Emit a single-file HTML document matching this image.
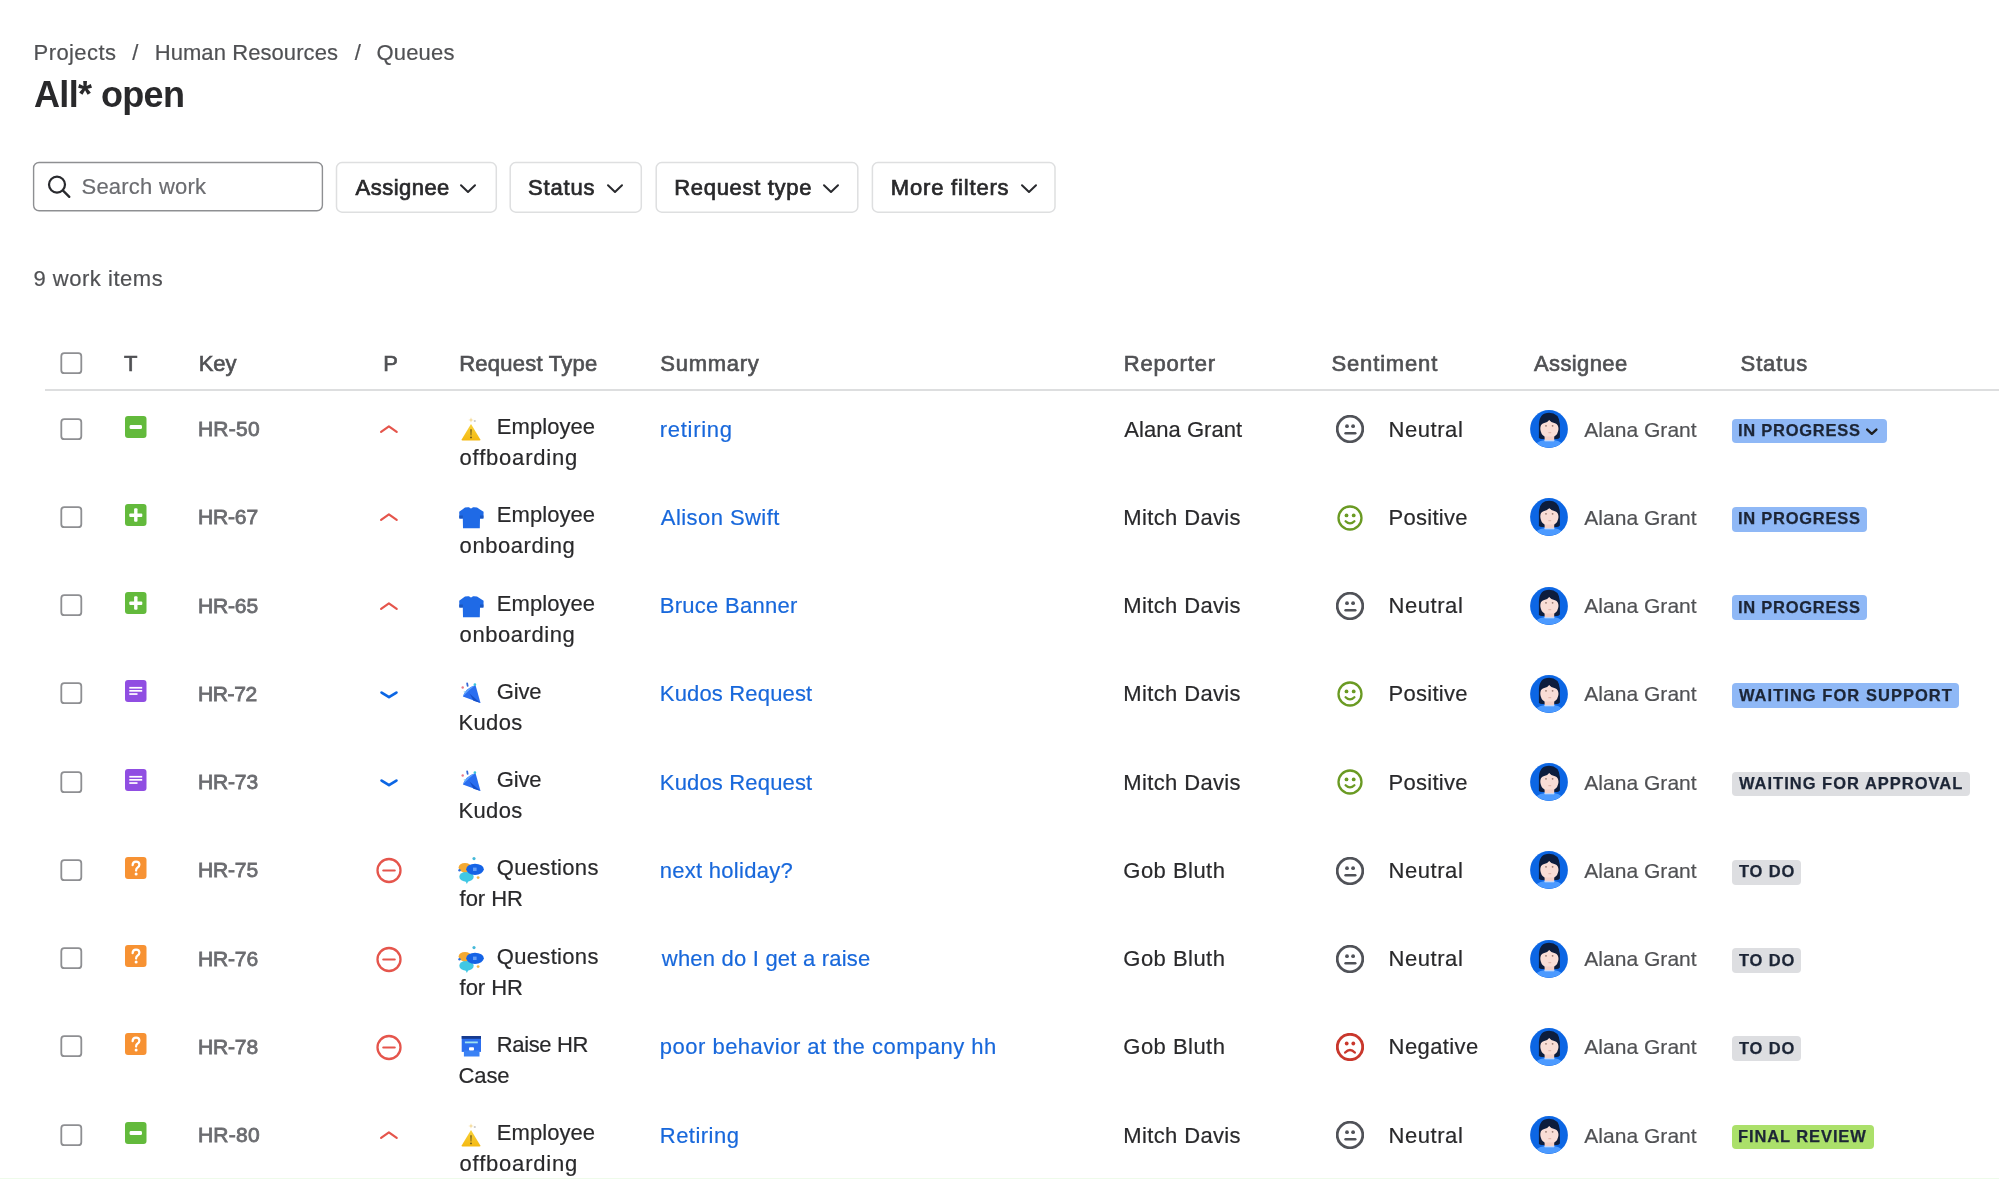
<!DOCTYPE html>
<html><head><meta charset="utf-8"><title>All* open</title>
<style>
html,body{margin:0;padding:0;background:#fff;width:1999px;height:1179px;overflow:hidden;position:relative}
.a{position:absolute;display:block}
.t{position:absolute;white-space:nowrap;font-family:"Liberation Sans",sans-serif}
</style></head><body>
<svg width="0" height="0" style="position:absolute"><defs><clipPath id="avc"><circle cx="19" cy="19" r="18.8"/></clipPath></defs></svg>
<svg class="a" style="left:0;top:0" width="1100" height="230"><rect x="33.6" y="162.5" width="288.8" height="48.3" rx="5.5" fill="none" stroke="#8e8f92" stroke-width="1.4"/></svg>
<svg class="a" style="left:44px;top:171px" width="30" height="30" viewBox="0 0 30 30"><circle cx="13" cy="13.6" r="8" fill="none" stroke="#292a2e" stroke-width="2.2"/><path d="M18.8 19.4 L25.3 25.9" stroke="#292a2e" stroke-width="2.3" stroke-linecap="round"/></svg>
<svg class="a" style="left:0;top:0" width="1100" height="230"><rect x="336.5" y="162.6" width="159.79999999999998" height="49.6" rx="5.5" fill="none" stroke="#dedfe0" stroke-width="1.5"/></svg>
<svg class="a" style="left:459.2px;top:182.5px" width="18" height="11" viewBox="0 0 18 11"><path d="M2 2.2 L9 9 L16 2.2" fill="none" stroke="#292a2e" stroke-width="2" stroke-linecap="round" stroke-linejoin="round"/></svg>
<svg class="a" style="left:0;top:0" width="1100" height="230"><rect x="510.2" y="162.6" width="131.1" height="49.6" rx="5.5" fill="none" stroke="#dedfe0" stroke-width="1.5"/></svg>
<svg class="a" style="left:605.5px;top:182.5px" width="18" height="11" viewBox="0 0 18 11"><path d="M2 2.2 L9 9 L16 2.2" fill="none" stroke="#292a2e" stroke-width="2" stroke-linecap="round" stroke-linejoin="round"/></svg>
<svg class="a" style="left:0;top:0" width="1100" height="230"><rect x="656.2" y="162.6" width="201.6" height="49.6" rx="5.5" fill="none" stroke="#dedfe0" stroke-width="1.5"/></svg>
<svg class="a" style="left:821.8px;top:182.5px" width="18" height="11" viewBox="0 0 18 11"><path d="M2 2.2 L9 9 L16 2.2" fill="none" stroke="#292a2e" stroke-width="2" stroke-linecap="round" stroke-linejoin="round"/></svg>
<svg class="a" style="left:0;top:0" width="1100" height="230"><rect x="872.4000000000001" y="162.6" width="182.6" height="49.6" rx="5.5" fill="none" stroke="#dedfe0" stroke-width="1.5"/></svg>
<svg class="a" style="left:1019.5px;top:182.5px" width="18" height="11" viewBox="0 0 18 11"><path d="M2 2.2 L9 9 L16 2.2" fill="none" stroke="#292a2e" stroke-width="2" stroke-linecap="round" stroke-linejoin="round"/></svg>
<svg class="a" style="left:50px;top:343.00px" width="40" height="40"><rect x="11.3" y="10.2" width="20" height="20" rx="3" fill="none" stroke="#8e8f92" stroke-width="1.8"/></svg>
<div class="a" style="left:45px;top:388.8px;width:1954px;height:2.2px;background:#dddedf"></div>
<svg class="a" style="left:50px;top:408.60px" width="40" height="40"><rect x="11.3" y="10.2" width="20" height="20" rx="3" fill="none" stroke="#8e8f92" stroke-width="1.8"/></svg>
<svg class="a" style="left:125px;top:415.60px" width="21.5" height="22" viewBox="0 0 21.5 22"><rect width="21.5" height="22" rx="3" fill="#63ba3c"/><rect x="4.6" y="9.1" width="12.4" height="4" rx="1.4" fill="#fff"/></svg>
<svg class="a" style="left:377px;top:422.00px" width="24" height="14" viewBox="0 0 24 14"><path d="M4.1 9.9 L11.9 4.4 L19.7 9.9" fill="none" stroke="#e5554c" stroke-width="2.2" stroke-linecap="round" stroke-linejoin="round"/></svg>
<svg class="a" style="left:456px;top:414.00px" width="30" height="30" viewBox="0 0 30 30"><defs><linearGradient id="wg429" x1="0" y1="0" x2="0" y2="1"><stop offset="0" stop-color="#f8d23a"/><stop offset="1" stop-color="#f4b912"/></linearGradient></defs><path d="M15 10 L24.2 25.2 Q24.8 26.4 23.4 26.4 L6.6 26.4 Q5.2 26.4 5.8 25.2 Z" fill="url(#wg429)"/><path d="M14.3 15.2 L15.7 15.2 L15.4 21.6 L14.6 21.6Z" fill="#6d5a1c"/><circle cx="15" cy="23.4" r="0.95" fill="#6d5a1c"/><path d="M15 3.2 L15.6 5.4 L17.8 6 L15.6 6.6 L15 8.8 L14.4 6.6 L12.2 6 L14.4 5.4Z" fill="#f2d58a"/><circle cx="18.8" cy="7" r="1.1" fill="#c9c9c9"/></svg>
<svg class="a" style="left:1336px;top:415.30px" width="28" height="28" viewBox="0 0 28 28"><circle cx="14" cy="14" r="12.8" fill="none" stroke="#505258" stroke-width="2.8"/><circle cx="11" cy="11.2" r="1.9" fill="#505258"/><circle cx="17.1" cy="11.2" r="1.9" fill="#505258"/><path d="M9.6 18.2 L19.2 18.2" stroke="#505258" stroke-width="2.6" stroke-linecap="round"/></svg>
<svg class="a" style="left:1529.8px;top:410.20px" width="38" height="38" viewBox="0 0 38 38"><circle cx="19" cy="19" r="18.9" fill="#0c66e4"/><g clip-path="url(#avc)"><path d="M3.5 39 Q5.5 31 14.2 30.2 L24.6 30.2 Q32.5 31 34.5 39Z" fill="#4c9aff"/><path d="M8.9 28 L8.9 14 Q9.5 2.8 19.2 2.8 Q29 2.8 29.9 14 L29.9 27.5 Q28 29.6 25.3 28.9 L13.9 28.9 Q10.6 29.6 8.9 28 Z" fill="#0d1d3d"/><rect x="14.6" y="21" width="9.6" height="9.4" fill="#f3cfc7"/><path d="M14.2 30.2 L24.6 30.2 L24 31.2 L14.8 31.2Z" fill="#dfe9fb"/><path d="M10.3 19 Q10.1 14.2 13.5 13.2 Q17.5 12.6 19.2 9.9 Q21 12.6 25 13.2 Q28.5 14.2 28.5 19 Q28.1 24.3 24.2 26.6 L14.6 26.6 Q10.7 24.3 10.3 19 Z" fill="#f9ddd6"/><circle cx="16" cy="15.8" r="0.9" fill="#9a7b72"/><circle cx="22.6" cy="15.8" r="0.9" fill="#9a7b72"/><path d="M18.4 22.7 L21.2 22.7" stroke="#d7a49b" stroke-width="0.8"/></g></svg>
<div class="a" style="left:1731.7px;top:418.60px;width:155.0px;height:24.8px;background:#8fb8f6;border-radius:4px"></div>
<svg class="a" style="left:1864px;top:427.00px" width="16" height="10" viewBox="0 0 16 10"><path d="M3.2 2.6 L7.8 6.8 L12.4 2.6" fill="none" stroke="#1e1f21" stroke-width="2.4" stroke-linecap="round" stroke-linejoin="round"/></svg>
<svg class="a" style="left:50px;top:496.85px" width="40" height="40"><rect x="11.3" y="10.2" width="20" height="20" rx="3" fill="none" stroke="#8e8f92" stroke-width="1.8"/></svg>
<svg class="a" style="left:125px;top:503.85px" width="21.5" height="22" viewBox="0 0 21.5 22"><rect width="21.5" height="22" rx="3" fill="#63ba3c"/><rect x="4.3" y="9.5" width="13" height="3.4" rx="1" fill="#fff"/><rect x="9.1" y="4.3" width="3.4" height="13.4" rx="1" fill="#fff"/></svg>
<svg class="a" style="left:377px;top:510.25px" width="24" height="14" viewBox="0 0 24 14"><path d="M4.1 9.9 L11.9 4.4 L19.7 9.9" fill="none" stroke="#e5554c" stroke-width="2.2" stroke-linecap="round" stroke-linejoin="round"/></svg>
<svg class="a" style="left:456px;top:502.25px" width="30" height="30" viewBox="0 0 30 30"><path d="M9 5.6 Q11 5.1 13 5.3 Q15 7.5 17 5.3 Q19 5.1 21 5.6 L27.6 9.8 L27.4 16.4 L24 16.4 L23.8 26.2 L7 26.2 L6.8 16.4 L3.4 16.4 L3.2 9.8 Z" fill="#1f6ae6"/><path d="M3.2 13.5 L6.8 13.5 L6.8 16.4 L3.4 16.4Z M24 13.5 L27.5 13.5 L27.4 16.4 L24 16.4Z" fill="#1a56c0"/></svg>
<svg class="a" style="left:1336px;top:503.55px" width="28" height="28" viewBox="0 0 28 28"><circle cx="14" cy="14" r="11.5" fill="none" stroke="#6a9a23" stroke-width="2.3"/><circle cx="10.5" cy="11.4" r="1.9" fill="#6a9a23"/><circle cx="17.7" cy="11.4" r="1.9" fill="#6a9a23"/><path d="M9.6 17.2 Q14 21.6 18.4 17.2" fill="none" stroke="#6a9a23" stroke-width="2.3" stroke-linecap="round"/></svg>
<svg class="a" style="left:1529.8px;top:498.45px" width="38" height="38" viewBox="0 0 38 38"><circle cx="19" cy="19" r="18.9" fill="#0c66e4"/><g clip-path="url(#avc)"><path d="M3.5 39 Q5.5 31 14.2 30.2 L24.6 30.2 Q32.5 31 34.5 39Z" fill="#4c9aff"/><path d="M8.9 28 L8.9 14 Q9.5 2.8 19.2 2.8 Q29 2.8 29.9 14 L29.9 27.5 Q28 29.6 25.3 28.9 L13.9 28.9 Q10.6 29.6 8.9 28 Z" fill="#0d1d3d"/><rect x="14.6" y="21" width="9.6" height="9.4" fill="#f3cfc7"/><path d="M14.2 30.2 L24.6 30.2 L24 31.2 L14.8 31.2Z" fill="#dfe9fb"/><path d="M10.3 19 Q10.1 14.2 13.5 13.2 Q17.5 12.6 19.2 9.9 Q21 12.6 25 13.2 Q28.5 14.2 28.5 19 Q28.1 24.3 24.2 26.6 L14.6 26.6 Q10.7 24.3 10.3 19 Z" fill="#f9ddd6"/><circle cx="16" cy="15.8" r="0.9" fill="#9a7b72"/><circle cx="22.6" cy="15.8" r="0.9" fill="#9a7b72"/><path d="M18.4 22.7 L21.2 22.7" stroke="#d7a49b" stroke-width="0.8"/></g></svg>
<div class="a" style="left:1731.7px;top:506.85px;width:135.3px;height:24.8px;background:#8fb8f6;border-radius:4px"></div>
<svg class="a" style="left:50px;top:585.10px" width="40" height="40"><rect x="11.3" y="10.2" width="20" height="20" rx="3" fill="none" stroke="#8e8f92" stroke-width="1.8"/></svg>
<svg class="a" style="left:125px;top:592.10px" width="21.5" height="22" viewBox="0 0 21.5 22"><rect width="21.5" height="22" rx="3" fill="#63ba3c"/><rect x="4.3" y="9.5" width="13" height="3.4" rx="1" fill="#fff"/><rect x="9.1" y="4.3" width="3.4" height="13.4" rx="1" fill="#fff"/></svg>
<svg class="a" style="left:377px;top:598.50px" width="24" height="14" viewBox="0 0 24 14"><path d="M4.1 9.9 L11.9 4.4 L19.7 9.9" fill="none" stroke="#e5554c" stroke-width="2.2" stroke-linecap="round" stroke-linejoin="round"/></svg>
<svg class="a" style="left:456px;top:590.50px" width="30" height="30" viewBox="0 0 30 30"><path d="M9 5.6 Q11 5.1 13 5.3 Q15 7.5 17 5.3 Q19 5.1 21 5.6 L27.6 9.8 L27.4 16.4 L24 16.4 L23.8 26.2 L7 26.2 L6.8 16.4 L3.4 16.4 L3.2 9.8 Z" fill="#1f6ae6"/><path d="M3.2 13.5 L6.8 13.5 L6.8 16.4 L3.4 16.4Z M24 13.5 L27.5 13.5 L27.4 16.4 L24 16.4Z" fill="#1a56c0"/></svg>
<svg class="a" style="left:1336px;top:591.80px" width="28" height="28" viewBox="0 0 28 28"><circle cx="14" cy="14" r="12.8" fill="none" stroke="#505258" stroke-width="2.8"/><circle cx="11" cy="11.2" r="1.9" fill="#505258"/><circle cx="17.1" cy="11.2" r="1.9" fill="#505258"/><path d="M9.6 18.2 L19.2 18.2" stroke="#505258" stroke-width="2.6" stroke-linecap="round"/></svg>
<svg class="a" style="left:1529.8px;top:586.70px" width="38" height="38" viewBox="0 0 38 38"><circle cx="19" cy="19" r="18.9" fill="#0c66e4"/><g clip-path="url(#avc)"><path d="M3.5 39 Q5.5 31 14.2 30.2 L24.6 30.2 Q32.5 31 34.5 39Z" fill="#4c9aff"/><path d="M8.9 28 L8.9 14 Q9.5 2.8 19.2 2.8 Q29 2.8 29.9 14 L29.9 27.5 Q28 29.6 25.3 28.9 L13.9 28.9 Q10.6 29.6 8.9 28 Z" fill="#0d1d3d"/><rect x="14.6" y="21" width="9.6" height="9.4" fill="#f3cfc7"/><path d="M14.2 30.2 L24.6 30.2 L24 31.2 L14.8 31.2Z" fill="#dfe9fb"/><path d="M10.3 19 Q10.1 14.2 13.5 13.2 Q17.5 12.6 19.2 9.9 Q21 12.6 25 13.2 Q28.5 14.2 28.5 19 Q28.1 24.3 24.2 26.6 L14.6 26.6 Q10.7 24.3 10.3 19 Z" fill="#f9ddd6"/><circle cx="16" cy="15.8" r="0.9" fill="#9a7b72"/><circle cx="22.6" cy="15.8" r="0.9" fill="#9a7b72"/><path d="M18.4 22.7 L21.2 22.7" stroke="#d7a49b" stroke-width="0.8"/></g></svg>
<div class="a" style="left:1731.7px;top:595.10px;width:135.3px;height:24.8px;background:#8fb8f6;border-radius:4px"></div>
<svg class="a" style="left:50px;top:673.35px" width="40" height="40"><rect x="11.3" y="10.2" width="20" height="20" rx="3" fill="none" stroke="#8e8f92" stroke-width="1.8"/></svg>
<svg class="a" style="left:125px;top:680.35px" width="21.5" height="22" viewBox="0 0 21.5 22"><rect width="21.5" height="22" rx="3" fill="#904ee2"/><rect x="4.3" y="6.9" width="12.9" height="1.7" fill="#fff"/><rect x="4.3" y="10.0" width="12.9" height="1.7" fill="#fff"/><rect x="4.3" y="13.2" width="8.2" height="1.7" fill="#fff"/></svg>
<svg class="a" style="left:377px;top:686.75px" width="24" height="14" viewBox="0 0 24 14"><path d="M4.6 5.6 L12 10.1 L19.4 5.6" fill="none" stroke="#0c66e4" stroke-width="2.8" stroke-linecap="round" stroke-linejoin="round"/></svg>
<svg class="a" style="left:456px;top:678.75px" width="30" height="30" viewBox="0 0 30 30"><path d="M6.9 17.6 Q9.2 9.6 19.5 6.1 L24.5 23.9 Z" fill="#2a6ef0"/><path d="M13.5 14.5 L24.5 23.9 L17.5 21.8 Z" fill="#1650c8"/><path d="M6.9 17.6 Q9.2 9.6 19.5 6.1 Q13 11 6.9 17.6Z" fill="#5fa0ff"/><rect x="10.5" y="3.4" width="1.8" height="4.4" rx="0.9" fill="#3466d6" transform="rotate(-10 11.4 5.6)"/><circle cx="6.7" cy="8.5" r="1.2" fill="#e7788a"/><circle cx="18.9" cy="5.6" r="1.3" fill="#39c3dc"/><circle cx="8.5" cy="12.8" r="0.9" fill="#a6e0ee"/></svg>
<svg class="a" style="left:1336px;top:680.05px" width="28" height="28" viewBox="0 0 28 28"><circle cx="14" cy="14" r="11.5" fill="none" stroke="#6a9a23" stroke-width="2.3"/><circle cx="10.5" cy="11.4" r="1.9" fill="#6a9a23"/><circle cx="17.7" cy="11.4" r="1.9" fill="#6a9a23"/><path d="M9.6 17.2 Q14 21.6 18.4 17.2" fill="none" stroke="#6a9a23" stroke-width="2.3" stroke-linecap="round"/></svg>
<svg class="a" style="left:1529.8px;top:674.95px" width="38" height="38" viewBox="0 0 38 38"><circle cx="19" cy="19" r="18.9" fill="#0c66e4"/><g clip-path="url(#avc)"><path d="M3.5 39 Q5.5 31 14.2 30.2 L24.6 30.2 Q32.5 31 34.5 39Z" fill="#4c9aff"/><path d="M8.9 28 L8.9 14 Q9.5 2.8 19.2 2.8 Q29 2.8 29.9 14 L29.9 27.5 Q28 29.6 25.3 28.9 L13.9 28.9 Q10.6 29.6 8.9 28 Z" fill="#0d1d3d"/><rect x="14.6" y="21" width="9.6" height="9.4" fill="#f3cfc7"/><path d="M14.2 30.2 L24.6 30.2 L24 31.2 L14.8 31.2Z" fill="#dfe9fb"/><path d="M10.3 19 Q10.1 14.2 13.5 13.2 Q17.5 12.6 19.2 9.9 Q21 12.6 25 13.2 Q28.5 14.2 28.5 19 Q28.1 24.3 24.2 26.6 L14.6 26.6 Q10.7 24.3 10.3 19 Z" fill="#f9ddd6"/><circle cx="16" cy="15.8" r="0.9" fill="#9a7b72"/><circle cx="22.6" cy="15.8" r="0.9" fill="#9a7b72"/><path d="M18.4 22.7 L21.2 22.7" stroke="#d7a49b" stroke-width="0.8"/></g></svg>
<div class="a" style="left:1731.7px;top:683.35px;width:227.7px;height:24.8px;background:#8fb8f6;border-radius:4px"></div>
<svg class="a" style="left:50px;top:761.60px" width="40" height="40"><rect x="11.3" y="10.2" width="20" height="20" rx="3" fill="none" stroke="#8e8f92" stroke-width="1.8"/></svg>
<svg class="a" style="left:125px;top:768.60px" width="21.5" height="22" viewBox="0 0 21.5 22"><rect width="21.5" height="22" rx="3" fill="#904ee2"/><rect x="4.3" y="6.9" width="12.9" height="1.7" fill="#fff"/><rect x="4.3" y="10.0" width="12.9" height="1.7" fill="#fff"/><rect x="4.3" y="13.2" width="8.2" height="1.7" fill="#fff"/></svg>
<svg class="a" style="left:377px;top:775.00px" width="24" height="14" viewBox="0 0 24 14"><path d="M4.6 5.6 L12 10.1 L19.4 5.6" fill="none" stroke="#0c66e4" stroke-width="2.8" stroke-linecap="round" stroke-linejoin="round"/></svg>
<svg class="a" style="left:456px;top:767.00px" width="30" height="30" viewBox="0 0 30 30"><path d="M6.9 17.6 Q9.2 9.6 19.5 6.1 L24.5 23.9 Z" fill="#2a6ef0"/><path d="M13.5 14.5 L24.5 23.9 L17.5 21.8 Z" fill="#1650c8"/><path d="M6.9 17.6 Q9.2 9.6 19.5 6.1 Q13 11 6.9 17.6Z" fill="#5fa0ff"/><rect x="10.5" y="3.4" width="1.8" height="4.4" rx="0.9" fill="#3466d6" transform="rotate(-10 11.4 5.6)"/><circle cx="6.7" cy="8.5" r="1.2" fill="#e7788a"/><circle cx="18.9" cy="5.6" r="1.3" fill="#39c3dc"/><circle cx="8.5" cy="12.8" r="0.9" fill="#a6e0ee"/></svg>
<svg class="a" style="left:1336px;top:768.30px" width="28" height="28" viewBox="0 0 28 28"><circle cx="14" cy="14" r="11.5" fill="none" stroke="#6a9a23" stroke-width="2.3"/><circle cx="10.5" cy="11.4" r="1.9" fill="#6a9a23"/><circle cx="17.7" cy="11.4" r="1.9" fill="#6a9a23"/><path d="M9.6 17.2 Q14 21.6 18.4 17.2" fill="none" stroke="#6a9a23" stroke-width="2.3" stroke-linecap="round"/></svg>
<svg class="a" style="left:1529.8px;top:763.20px" width="38" height="38" viewBox="0 0 38 38"><circle cx="19" cy="19" r="18.9" fill="#0c66e4"/><g clip-path="url(#avc)"><path d="M3.5 39 Q5.5 31 14.2 30.2 L24.6 30.2 Q32.5 31 34.5 39Z" fill="#4c9aff"/><path d="M8.9 28 L8.9 14 Q9.5 2.8 19.2 2.8 Q29 2.8 29.9 14 L29.9 27.5 Q28 29.6 25.3 28.9 L13.9 28.9 Q10.6 29.6 8.9 28 Z" fill="#0d1d3d"/><rect x="14.6" y="21" width="9.6" height="9.4" fill="#f3cfc7"/><path d="M14.2 30.2 L24.6 30.2 L24 31.2 L14.8 31.2Z" fill="#dfe9fb"/><path d="M10.3 19 Q10.1 14.2 13.5 13.2 Q17.5 12.6 19.2 9.9 Q21 12.6 25 13.2 Q28.5 14.2 28.5 19 Q28.1 24.3 24.2 26.6 L14.6 26.6 Q10.7 24.3 10.3 19 Z" fill="#f9ddd6"/><circle cx="16" cy="15.8" r="0.9" fill="#9a7b72"/><circle cx="22.6" cy="15.8" r="0.9" fill="#9a7b72"/><path d="M18.4 22.7 L21.2 22.7" stroke="#d7a49b" stroke-width="0.8"/></g></svg>
<div class="a" style="left:1731.7px;top:771.60px;width:238.1px;height:24.8px;background:#dddee1;border-radius:4px"></div>
<svg class="a" style="left:50px;top:849.85px" width="40" height="40"><rect x="11.3" y="10.2" width="20" height="20" rx="3" fill="none" stroke="#8e8f92" stroke-width="1.8"/></svg>
<svg class="a" style="left:125px;top:856.85px" width="21.5" height="22" viewBox="0 0 21.5 22"><rect width="21.5" height="22" rx="3" fill="#f79233"/><path d="M7.6 8.2 Q7.6 4.6 11 4.6 Q14.4 4.6 14.4 7.8 Q14.4 9.6 12.4 10.8 Q11.1 11.6 11.1 13.6" fill="none" stroke="#fff" stroke-width="2.2" stroke-linecap="round"/><circle cx="11.1" cy="17.1" r="1.5" fill="#fff"/></svg>
<svg class="a" style="left:375px;top:856.25px" width="28" height="28" viewBox="0 0 28 28"><circle cx="14" cy="14.5" r="11.5" fill="none" stroke="#e5554c" stroke-width="2.3"/><path d="M8.3 14.5 L19.7 14.5" stroke="#e5554c" stroke-width="2.2" stroke-linecap="round"/></svg>
<svg class="a" style="left:456px;top:855.25px" width="30" height="30" viewBox="0 0 30 30"><ellipse cx="10.5" cy="21.7" rx="7.2" ry="5" fill="#40c8e4"/><path d="M9 25 L10.8 29 L13 25Z" fill="#40c8e4"/><ellipse cx="9" cy="12.6" rx="6.4" ry="4.7" fill="#f4aa33"/><ellipse cx="19" cy="14.3" rx="8.8" ry="5.6" fill="#1463e6"/><path d="M17 12.6 L20.6 12.6 L20.6 16 L17 16Z" fill="#7fb0f8" opacity="0.75"/><circle cx="18" cy="3.6" r="1.6" fill="#46b9d8"/><circle cx="22.1" cy="22.6" r="1.4" fill="#f2b84b"/><circle cx="3.5" cy="15.2" r="1.2" fill="#2f6fe0"/></svg>
<svg class="a" style="left:1336px;top:856.55px" width="28" height="28" viewBox="0 0 28 28"><circle cx="14" cy="14" r="12.8" fill="none" stroke="#505258" stroke-width="2.8"/><circle cx="11" cy="11.2" r="1.9" fill="#505258"/><circle cx="17.1" cy="11.2" r="1.9" fill="#505258"/><path d="M9.6 18.2 L19.2 18.2" stroke="#505258" stroke-width="2.6" stroke-linecap="round"/></svg>
<svg class="a" style="left:1529.8px;top:851.45px" width="38" height="38" viewBox="0 0 38 38"><circle cx="19" cy="19" r="18.9" fill="#0c66e4"/><g clip-path="url(#avc)"><path d="M3.5 39 Q5.5 31 14.2 30.2 L24.6 30.2 Q32.5 31 34.5 39Z" fill="#4c9aff"/><path d="M8.9 28 L8.9 14 Q9.5 2.8 19.2 2.8 Q29 2.8 29.9 14 L29.9 27.5 Q28 29.6 25.3 28.9 L13.9 28.9 Q10.6 29.6 8.9 28 Z" fill="#0d1d3d"/><rect x="14.6" y="21" width="9.6" height="9.4" fill="#f3cfc7"/><path d="M14.2 30.2 L24.6 30.2 L24 31.2 L14.8 31.2Z" fill="#dfe9fb"/><path d="M10.3 19 Q10.1 14.2 13.5 13.2 Q17.5 12.6 19.2 9.9 Q21 12.6 25 13.2 Q28.5 14.2 28.5 19 Q28.1 24.3 24.2 26.6 L14.6 26.6 Q10.7 24.3 10.3 19 Z" fill="#f9ddd6"/><circle cx="16" cy="15.8" r="0.9" fill="#9a7b72"/><circle cx="22.6" cy="15.8" r="0.9" fill="#9a7b72"/><path d="M18.4 22.7 L21.2 22.7" stroke="#d7a49b" stroke-width="0.8"/></g></svg>
<div class="a" style="left:1731.7px;top:859.85px;width:69.0px;height:24.8px;background:#dddee1;border-radius:4px"></div>
<svg class="a" style="left:50px;top:938.10px" width="40" height="40"><rect x="11.3" y="10.2" width="20" height="20" rx="3" fill="none" stroke="#8e8f92" stroke-width="1.8"/></svg>
<svg class="a" style="left:125px;top:945.10px" width="21.5" height="22" viewBox="0 0 21.5 22"><rect width="21.5" height="22" rx="3" fill="#f79233"/><path d="M7.6 8.2 Q7.6 4.6 11 4.6 Q14.4 4.6 14.4 7.8 Q14.4 9.6 12.4 10.8 Q11.1 11.6 11.1 13.6" fill="none" stroke="#fff" stroke-width="2.2" stroke-linecap="round"/><circle cx="11.1" cy="17.1" r="1.5" fill="#fff"/></svg>
<svg class="a" style="left:375px;top:944.50px" width="28" height="28" viewBox="0 0 28 28"><circle cx="14" cy="14.5" r="11.5" fill="none" stroke="#e5554c" stroke-width="2.3"/><path d="M8.3 14.5 L19.7 14.5" stroke="#e5554c" stroke-width="2.2" stroke-linecap="round"/></svg>
<svg class="a" style="left:456px;top:943.50px" width="30" height="30" viewBox="0 0 30 30"><ellipse cx="10.5" cy="21.7" rx="7.2" ry="5" fill="#40c8e4"/><path d="M9 25 L10.8 29 L13 25Z" fill="#40c8e4"/><ellipse cx="9" cy="12.6" rx="6.4" ry="4.7" fill="#f4aa33"/><ellipse cx="19" cy="14.3" rx="8.8" ry="5.6" fill="#1463e6"/><path d="M17 12.6 L20.6 12.6 L20.6 16 L17 16Z" fill="#7fb0f8" opacity="0.75"/><circle cx="18" cy="3.6" r="1.6" fill="#46b9d8"/><circle cx="22.1" cy="22.6" r="1.4" fill="#f2b84b"/><circle cx="3.5" cy="15.2" r="1.2" fill="#2f6fe0"/></svg>
<svg class="a" style="left:1336px;top:944.80px" width="28" height="28" viewBox="0 0 28 28"><circle cx="14" cy="14" r="12.8" fill="none" stroke="#505258" stroke-width="2.8"/><circle cx="11" cy="11.2" r="1.9" fill="#505258"/><circle cx="17.1" cy="11.2" r="1.9" fill="#505258"/><path d="M9.6 18.2 L19.2 18.2" stroke="#505258" stroke-width="2.6" stroke-linecap="round"/></svg>
<svg class="a" style="left:1529.8px;top:939.70px" width="38" height="38" viewBox="0 0 38 38"><circle cx="19" cy="19" r="18.9" fill="#0c66e4"/><g clip-path="url(#avc)"><path d="M3.5 39 Q5.5 31 14.2 30.2 L24.6 30.2 Q32.5 31 34.5 39Z" fill="#4c9aff"/><path d="M8.9 28 L8.9 14 Q9.5 2.8 19.2 2.8 Q29 2.8 29.9 14 L29.9 27.5 Q28 29.6 25.3 28.9 L13.9 28.9 Q10.6 29.6 8.9 28 Z" fill="#0d1d3d"/><rect x="14.6" y="21" width="9.6" height="9.4" fill="#f3cfc7"/><path d="M14.2 30.2 L24.6 30.2 L24 31.2 L14.8 31.2Z" fill="#dfe9fb"/><path d="M10.3 19 Q10.1 14.2 13.5 13.2 Q17.5 12.6 19.2 9.9 Q21 12.6 25 13.2 Q28.5 14.2 28.5 19 Q28.1 24.3 24.2 26.6 L14.6 26.6 Q10.7 24.3 10.3 19 Z" fill="#f9ddd6"/><circle cx="16" cy="15.8" r="0.9" fill="#9a7b72"/><circle cx="22.6" cy="15.8" r="0.9" fill="#9a7b72"/><path d="M18.4 22.7 L21.2 22.7" stroke="#d7a49b" stroke-width="0.8"/></g></svg>
<div class="a" style="left:1731.7px;top:948.10px;width:69.0px;height:24.8px;background:#dddee1;border-radius:4px"></div>
<svg class="a" style="left:50px;top:1026.35px" width="40" height="40"><rect x="11.3" y="10.2" width="20" height="20" rx="3" fill="none" stroke="#8e8f92" stroke-width="1.8"/></svg>
<svg class="a" style="left:125px;top:1033.35px" width="21.5" height="22" viewBox="0 0 21.5 22"><rect width="21.5" height="22" rx="3" fill="#f79233"/><path d="M7.6 8.2 Q7.6 4.6 11 4.6 Q14.4 4.6 14.4 7.8 Q14.4 9.6 12.4 10.8 Q11.1 11.6 11.1 13.6" fill="none" stroke="#fff" stroke-width="2.2" stroke-linecap="round"/><circle cx="11.1" cy="17.1" r="1.5" fill="#fff"/></svg>
<svg class="a" style="left:375px;top:1032.75px" width="28" height="28" viewBox="0 0 28 28"><circle cx="14" cy="14.5" r="11.5" fill="none" stroke="#e5554c" stroke-width="2.3"/><path d="M8.3 14.5 L19.7 14.5" stroke="#e5554c" stroke-width="2.2" stroke-linecap="round"/></svg>
<svg class="a" style="left:456px;top:1031.75px" width="30" height="30" viewBox="0 0 30 30"><rect x="5.7" y="4" width="19.3" height="15.9" fill="#2c6fef"/><rect x="7.9" y="18.5" width="15.6" height="6" fill="#3a82f5"/><rect x="5.7" y="4" width="19.3" height="2.8" fill="#173b8f"/><rect x="8.9" y="9.5" width="12.9" height="1.8" fill="#9fe3ef"/><rect x="13" y="15.2" width="5" height="3.4" rx="1" fill="#fff"/></svg>
<svg class="a" style="left:1336px;top:1033.05px" width="28" height="28" viewBox="0 0 28 28"><circle cx="14" cy="14" r="12.7" fill="none" stroke="#c9372c" stroke-width="2.9"/><circle cx="10.7" cy="10.5" r="1.9" fill="#c9372c"/><circle cx="17.3" cy="10.5" r="1.9" fill="#c9372c"/><path d="M9.2 19.5 Q14 14.6 18.8 19.5" fill="none" stroke="#c9372c" stroke-width="2.5" stroke-linecap="round"/></svg>
<svg class="a" style="left:1529.8px;top:1027.95px" width="38" height="38" viewBox="0 0 38 38"><circle cx="19" cy="19" r="18.9" fill="#0c66e4"/><g clip-path="url(#avc)"><path d="M3.5 39 Q5.5 31 14.2 30.2 L24.6 30.2 Q32.5 31 34.5 39Z" fill="#4c9aff"/><path d="M8.9 28 L8.9 14 Q9.5 2.8 19.2 2.8 Q29 2.8 29.9 14 L29.9 27.5 Q28 29.6 25.3 28.9 L13.9 28.9 Q10.6 29.6 8.9 28 Z" fill="#0d1d3d"/><rect x="14.6" y="21" width="9.6" height="9.4" fill="#f3cfc7"/><path d="M14.2 30.2 L24.6 30.2 L24 31.2 L14.8 31.2Z" fill="#dfe9fb"/><path d="M10.3 19 Q10.1 14.2 13.5 13.2 Q17.5 12.6 19.2 9.9 Q21 12.6 25 13.2 Q28.5 14.2 28.5 19 Q28.1 24.3 24.2 26.6 L14.6 26.6 Q10.7 24.3 10.3 19 Z" fill="#f9ddd6"/><circle cx="16" cy="15.8" r="0.9" fill="#9a7b72"/><circle cx="22.6" cy="15.8" r="0.9" fill="#9a7b72"/><path d="M18.4 22.7 L21.2 22.7" stroke="#d7a49b" stroke-width="0.8"/></g></svg>
<div class="a" style="left:1731.7px;top:1036.35px;width:69.0px;height:24.8px;background:#dddee1;border-radius:4px"></div>
<svg class="a" style="left:50px;top:1114.60px" width="40" height="40"><rect x="11.3" y="10.2" width="20" height="20" rx="3" fill="none" stroke="#8e8f92" stroke-width="1.8"/></svg>
<svg class="a" style="left:125px;top:1121.60px" width="21.5" height="22" viewBox="0 0 21.5 22"><rect width="21.5" height="22" rx="3" fill="#63ba3c"/><rect x="4.6" y="9.1" width="12.4" height="4" rx="1.4" fill="#fff"/></svg>
<svg class="a" style="left:377px;top:1128.00px" width="24" height="14" viewBox="0 0 24 14"><path d="M4.1 9.9 L11.9 4.4 L19.7 9.9" fill="none" stroke="#e5554c" stroke-width="2.2" stroke-linecap="round" stroke-linejoin="round"/></svg>
<svg class="a" style="left:456px;top:1120.00px" width="30" height="30" viewBox="0 0 30 30"><defs><linearGradient id="wg1135" x1="0" y1="0" x2="0" y2="1"><stop offset="0" stop-color="#f8d23a"/><stop offset="1" stop-color="#f4b912"/></linearGradient></defs><path d="M15 10 L24.2 25.2 Q24.8 26.4 23.4 26.4 L6.6 26.4 Q5.2 26.4 5.8 25.2 Z" fill="url(#wg1135)"/><path d="M14.3 15.2 L15.7 15.2 L15.4 21.6 L14.6 21.6Z" fill="#6d5a1c"/><circle cx="15" cy="23.4" r="0.95" fill="#6d5a1c"/><path d="M15 3.2 L15.6 5.4 L17.8 6 L15.6 6.6 L15 8.8 L14.4 6.6 L12.2 6 L14.4 5.4Z" fill="#f2d58a"/><circle cx="18.8" cy="7" r="1.1" fill="#c9c9c9"/></svg>
<svg class="a" style="left:1336px;top:1121.30px" width="28" height="28" viewBox="0 0 28 28"><circle cx="14" cy="14" r="12.8" fill="none" stroke="#505258" stroke-width="2.8"/><circle cx="11" cy="11.2" r="1.9" fill="#505258"/><circle cx="17.1" cy="11.2" r="1.9" fill="#505258"/><path d="M9.6 18.2 L19.2 18.2" stroke="#505258" stroke-width="2.6" stroke-linecap="round"/></svg>
<svg class="a" style="left:1529.8px;top:1116.20px" width="38" height="38" viewBox="0 0 38 38"><circle cx="19" cy="19" r="18.9" fill="#0c66e4"/><g clip-path="url(#avc)"><path d="M3.5 39 Q5.5 31 14.2 30.2 L24.6 30.2 Q32.5 31 34.5 39Z" fill="#4c9aff"/><path d="M8.9 28 L8.9 14 Q9.5 2.8 19.2 2.8 Q29 2.8 29.9 14 L29.9 27.5 Q28 29.6 25.3 28.9 L13.9 28.9 Q10.6 29.6 8.9 28 Z" fill="#0d1d3d"/><rect x="14.6" y="21" width="9.6" height="9.4" fill="#f3cfc7"/><path d="M14.2 30.2 L24.6 30.2 L24 31.2 L14.8 31.2Z" fill="#dfe9fb"/><path d="M10.3 19 Q10.1 14.2 13.5 13.2 Q17.5 12.6 19.2 9.9 Q21 12.6 25 13.2 Q28.5 14.2 28.5 19 Q28.1 24.3 24.2 26.6 L14.6 26.6 Q10.7 24.3 10.3 19 Z" fill="#f9ddd6"/><circle cx="16" cy="15.8" r="0.9" fill="#9a7b72"/><circle cx="22.6" cy="15.8" r="0.9" fill="#9a7b72"/><path d="M18.4 22.7 L21.2 22.7" stroke="#d7a49b" stroke-width="0.8"/></g></svg>
<div class="a" style="left:1731.7px;top:1124.60px;width:142.2px;height:24.8px;background:#abe06a;border-radius:4px"></div>
<div style="position:absolute;left:0;top:0;width:1999px;height:1179px;will-change:transform">
<div class="t" style="left:33.60px;top:41.60px;font-size:22px;line-height:22px;font-weight:400;color:#505154;letter-spacing:0.404px;-webkit-text-stroke:0.2px #505154;">Projects</div>
<div class="t" style="left:132.20px;top:41.60px;font-size:22px;line-height:22px;font-weight:400;color:#505154;-webkit-text-stroke:0.2px #505154;">/</div>
<div class="t" style="left:154.70px;top:41.60px;font-size:22px;line-height:22px;font-weight:400;color:#505154;letter-spacing:0.079px;-webkit-text-stroke:0.2px #505154;">Human Resources</div>
<div class="t" style="left:354.80px;top:41.60px;font-size:22px;line-height:22px;font-weight:400;color:#505154;-webkit-text-stroke:0.2px #505154;">/</div>
<div class="t" style="left:376.60px;top:41.60px;font-size:22px;line-height:22px;font-weight:400;color:#505154;letter-spacing:0.149px;-webkit-text-stroke:0.2px #505154;">Queues</div>
<div class="t" style="left:34.00px;top:76.90px;font-size:36px;line-height:36px;font-weight:700;color:#29292b;letter-spacing:-0.627px;">All* open</div>
<div class="t" style="left:81.50px;top:176.00px;font-size:22px;line-height:22px;font-weight:400;color:#6b6c70;letter-spacing:0.223px;-webkit-text-stroke:0.2px #6b6c70;">Search work</div>
<div class="t" style="left:355.60px;top:177.10px;font-size:22px;line-height:22px;font-weight:400;color:#29292b;letter-spacing:0.462px;-webkit-text-stroke:0.7px #29292b;">Assignee</div>
<div class="t" style="left:528.00px;top:177.10px;font-size:22px;line-height:22px;font-weight:400;color:#29292b;letter-spacing:0.826px;-webkit-text-stroke:0.7px #29292b;">Status</div>
<div class="t" style="left:674.30px;top:177.10px;font-size:22px;line-height:22px;font-weight:400;color:#29292b;letter-spacing:0.682px;-webkit-text-stroke:0.7px #29292b;">Request type</div>
<div class="t" style="left:890.80px;top:177.10px;font-size:22px;line-height:22px;font-weight:400;color:#29292b;letter-spacing:0.818px;-webkit-text-stroke:0.7px #29292b;">More filters</div>
<div class="t" style="left:33.40px;top:267.80px;font-size:22px;line-height:22px;font-weight:400;color:#505154;letter-spacing:0.530px;-webkit-text-stroke:0.2px #505154;">9 work items</div>
<div class="t" style="left:124.00px;top:353.00px;font-size:22px;line-height:22px;font-weight:400;color:#505154;-webkit-text-stroke:0.65px #505154;">T</div>
<div class="t" style="left:198.70px;top:353.00px;font-size:22px;line-height:22px;font-weight:400;color:#505154;-webkit-text-stroke:0.65px #505154;">Key</div>
<div class="t" style="left:383.20px;top:353.00px;font-size:22px;line-height:22px;font-weight:400;color:#505154;-webkit-text-stroke:0.65px #505154;">P</div>
<div class="t" style="left:459.20px;top:353.00px;font-size:22px;line-height:22px;font-weight:400;color:#505154;letter-spacing:0.244px;-webkit-text-stroke:0.65px #505154;">Request Type</div>
<div class="t" style="left:660.30px;top:353.00px;font-size:22px;line-height:22px;font-weight:400;color:#505154;letter-spacing:0.713px;-webkit-text-stroke:0.65px #505154;">Summary</div>
<div class="t" style="left:1123.70px;top:353.00px;font-size:22px;line-height:22px;font-weight:400;color:#505154;letter-spacing:0.819px;-webkit-text-stroke:0.65px #505154;">Reporter</div>
<div class="t" style="left:1331.50px;top:353.00px;font-size:22px;line-height:22px;font-weight:400;color:#505154;letter-spacing:0.845px;-webkit-text-stroke:0.65px #505154;">Sentiment</div>
<div class="t" style="left:1534.00px;top:353.00px;font-size:22px;line-height:22px;font-weight:400;color:#505154;letter-spacing:0.390px;-webkit-text-stroke:0.65px #505154;">Assignee</div>
<div class="t" style="left:1740.60px;top:353.00px;font-size:22px;line-height:22px;font-weight:400;color:#505154;letter-spacing:0.866px;-webkit-text-stroke:0.65px #505154;">Status</div>
<div class="t" style="left:197.90px;top:418.20px;font-size:21px;line-height:21px;font-weight:400;color:#6b6c70;letter-spacing:0.249px;-webkit-text-stroke:0.8px #6b6c70;">HR-50</div>
<div class="t" style="left:496.80px;top:416.20px;font-size:22px;line-height:22px;font-weight:400;color:#29292b;letter-spacing:0.058px;-webkit-text-stroke:0.2px #29292b;">Employee</div>
<div class="t" style="left:459.60px;top:447.20px;font-size:22px;line-height:22px;font-weight:400;color:#29292b;letter-spacing:0.795px;-webkit-text-stroke:0.2px #29292b;">offboarding</div>
<div class="t" style="left:659.80px;top:418.50px;font-size:22px;line-height:22px;font-weight:400;color:#1868db;letter-spacing:0.713px;-webkit-text-stroke:0.2px #1868db;">retiring</div>
<div class="t" style="left:1124.30px;top:418.60px;font-size:22px;line-height:22px;font-weight:400;color:#29292b;letter-spacing:0.041px;-webkit-text-stroke:0.2px #29292b;">Alana Grant</div>
<div class="t" style="left:1388.60px;top:418.50px;font-size:22px;line-height:22px;font-weight:400;color:#29292b;letter-spacing:0.545px;-webkit-text-stroke:0.2px #29292b;">Neutral</div>
<div class="t" style="left:1584.30px;top:418.60px;font-size:21px;line-height:21px;font-weight:400;color:#505154;letter-spacing:0.027px;-webkit-text-stroke:0.2px #505154;">Alana Grant</div>
<div class="t" style="left:1737.90px;top:422.20px;font-size:16.5px;line-height:16.5px;font-weight:700;color:#1c2536;letter-spacing:0.750px;-webkit-text-stroke:0.25px #1c2536;">IN PROGRESS</div>
<div class="t" style="left:197.90px;top:506.45px;font-size:21px;line-height:21px;font-weight:400;color:#6b6c70;letter-spacing:-0.126px;-webkit-text-stroke:0.8px #6b6c70;">HR-67</div>
<div class="t" style="left:496.80px;top:504.45px;font-size:22px;line-height:22px;font-weight:400;color:#29292b;letter-spacing:0.058px;-webkit-text-stroke:0.2px #29292b;">Employee</div>
<div class="t" style="left:459.60px;top:535.45px;font-size:22px;line-height:22px;font-weight:400;color:#29292b;letter-spacing:0.560px;-webkit-text-stroke:0.2px #29292b;">onboarding</div>
<div class="t" style="left:660.80px;top:506.75px;font-size:22px;line-height:22px;font-weight:400;color:#1868db;letter-spacing:0.437px;-webkit-text-stroke:0.2px #1868db;">Alison Swift</div>
<div class="t" style="left:1123.30px;top:506.85px;font-size:22px;line-height:22px;font-weight:400;color:#29292b;letter-spacing:0.362px;-webkit-text-stroke:0.2px #29292b;">Mitch Davis</div>
<div class="t" style="left:1388.60px;top:506.75px;font-size:22px;line-height:22px;font-weight:400;color:#29292b;letter-spacing:0.258px;-webkit-text-stroke:0.2px #29292b;">Positive</div>
<div class="t" style="left:1584.30px;top:506.85px;font-size:21px;line-height:21px;font-weight:400;color:#505154;letter-spacing:0.027px;-webkit-text-stroke:0.2px #505154;">Alana Grant</div>
<div class="t" style="left:1737.90px;top:510.45px;font-size:16.5px;line-height:16.5px;font-weight:700;color:#1c2536;letter-spacing:0.750px;-webkit-text-stroke:0.25px #1c2536;">IN PROGRESS</div>
<div class="t" style="left:197.90px;top:594.70px;font-size:21px;line-height:21px;font-weight:400;color:#6b6c70;letter-spacing:-0.126px;-webkit-text-stroke:0.8px #6b6c70;">HR-65</div>
<div class="t" style="left:496.80px;top:592.70px;font-size:22px;line-height:22px;font-weight:400;color:#29292b;letter-spacing:0.058px;-webkit-text-stroke:0.2px #29292b;">Employee</div>
<div class="t" style="left:459.60px;top:623.70px;font-size:22px;line-height:22px;font-weight:400;color:#29292b;letter-spacing:0.560px;-webkit-text-stroke:0.2px #29292b;">onboarding</div>
<div class="t" style="left:659.80px;top:595.00px;font-size:22px;line-height:22px;font-weight:400;color:#1868db;letter-spacing:0.264px;-webkit-text-stroke:0.2px #1868db;">Bruce Banner</div>
<div class="t" style="left:1123.30px;top:595.10px;font-size:22px;line-height:22px;font-weight:400;color:#29292b;letter-spacing:0.362px;-webkit-text-stroke:0.2px #29292b;">Mitch Davis</div>
<div class="t" style="left:1388.60px;top:595.00px;font-size:22px;line-height:22px;font-weight:400;color:#29292b;letter-spacing:0.545px;-webkit-text-stroke:0.2px #29292b;">Neutral</div>
<div class="t" style="left:1584.30px;top:595.10px;font-size:21px;line-height:21px;font-weight:400;color:#505154;letter-spacing:0.027px;-webkit-text-stroke:0.2px #505154;">Alana Grant</div>
<div class="t" style="left:1737.90px;top:598.70px;font-size:16.5px;line-height:16.5px;font-weight:700;color:#1c2536;letter-spacing:0.750px;-webkit-text-stroke:0.25px #1c2536;">IN PROGRESS</div>
<div class="t" style="left:197.90px;top:682.95px;font-size:21px;line-height:21px;font-weight:400;color:#6b6c70;letter-spacing:-0.351px;-webkit-text-stroke:0.8px #6b6c70;">HR-72</div>
<div class="t" style="left:496.80px;top:680.95px;font-size:22px;line-height:22px;font-weight:400;color:#29292b;letter-spacing:-0.167px;-webkit-text-stroke:0.2px #29292b;">Give</div>
<div class="t" style="left:458.60px;top:711.95px;font-size:22px;line-height:22px;font-weight:400;color:#29292b;letter-spacing:0.305px;-webkit-text-stroke:0.2px #29292b;">Kudos</div>
<div class="t" style="left:659.80px;top:683.25px;font-size:22px;line-height:22px;font-weight:400;color:#1868db;letter-spacing:0.165px;-webkit-text-stroke:0.2px #1868db;">Kudos Request</div>
<div class="t" style="left:1123.30px;top:683.35px;font-size:22px;line-height:22px;font-weight:400;color:#29292b;letter-spacing:0.362px;-webkit-text-stroke:0.2px #29292b;">Mitch Davis</div>
<div class="t" style="left:1388.60px;top:683.25px;font-size:22px;line-height:22px;font-weight:400;color:#29292b;letter-spacing:0.258px;-webkit-text-stroke:0.2px #29292b;">Positive</div>
<div class="t" style="left:1584.30px;top:683.35px;font-size:21px;line-height:21px;font-weight:400;color:#505154;letter-spacing:0.027px;-webkit-text-stroke:0.2px #505154;">Alana Grant</div>
<div class="t" style="left:1738.90px;top:686.95px;font-size:16.5px;line-height:16.5px;font-weight:700;color:#1c2536;letter-spacing:1.036px;-webkit-text-stroke:0.25px #1c2536;">WAITING FOR SUPPORT</div>
<div class="t" style="left:197.90px;top:771.20px;font-size:21px;line-height:21px;font-weight:400;color:#6b6c70;letter-spacing:-0.126px;-webkit-text-stroke:0.8px #6b6c70;">HR-73</div>
<div class="t" style="left:496.80px;top:769.20px;font-size:22px;line-height:22px;font-weight:400;color:#29292b;letter-spacing:-0.167px;-webkit-text-stroke:0.2px #29292b;">Give</div>
<div class="t" style="left:458.60px;top:800.20px;font-size:22px;line-height:22px;font-weight:400;color:#29292b;letter-spacing:0.305px;-webkit-text-stroke:0.2px #29292b;">Kudos</div>
<div class="t" style="left:659.80px;top:771.50px;font-size:22px;line-height:22px;font-weight:400;color:#1868db;letter-spacing:0.165px;-webkit-text-stroke:0.2px #1868db;">Kudos Request</div>
<div class="t" style="left:1123.30px;top:771.60px;font-size:22px;line-height:22px;font-weight:400;color:#29292b;letter-spacing:0.362px;-webkit-text-stroke:0.2px #29292b;">Mitch Davis</div>
<div class="t" style="left:1388.60px;top:771.50px;font-size:22px;line-height:22px;font-weight:400;color:#29292b;letter-spacing:0.258px;-webkit-text-stroke:0.2px #29292b;">Positive</div>
<div class="t" style="left:1584.30px;top:771.60px;font-size:21px;line-height:21px;font-weight:400;color:#505154;letter-spacing:0.027px;-webkit-text-stroke:0.2px #505154;">Alana Grant</div>
<div class="t" style="left:1738.90px;top:775.20px;font-size:16.5px;line-height:16.5px;font-weight:700;color:#1c2536;letter-spacing:1.003px;-webkit-text-stroke:0.25px #1c2536;">WAITING FOR APPROVAL</div>
<div class="t" style="left:197.90px;top:859.45px;font-size:21px;line-height:21px;font-weight:400;color:#6b6c70;letter-spacing:-0.126px;-webkit-text-stroke:0.8px #6b6c70;">HR-75</div>
<div class="t" style="left:496.80px;top:857.45px;font-size:22px;line-height:22px;font-weight:400;color:#29292b;letter-spacing:0.318px;-webkit-text-stroke:0.2px #29292b;">Questions</div>
<div class="t" style="left:459.60px;top:888.45px;font-size:22px;line-height:22px;font-weight:400;color:#29292b;letter-spacing:-0.055px;-webkit-text-stroke:0.2px #29292b;">for HR</div>
<div class="t" style="left:659.80px;top:859.75px;font-size:22px;line-height:22px;font-weight:400;color:#1868db;letter-spacing:0.266px;-webkit-text-stroke:0.2px #1868db;">next holiday?</div>
<div class="t" style="left:1123.30px;top:859.85px;font-size:22px;line-height:22px;font-weight:400;color:#29292b;letter-spacing:0.474px;-webkit-text-stroke:0.2px #29292b;">Gob Bluth</div>
<div class="t" style="left:1388.60px;top:859.75px;font-size:22px;line-height:22px;font-weight:400;color:#29292b;letter-spacing:0.545px;-webkit-text-stroke:0.2px #29292b;">Neutral</div>
<div class="t" style="left:1584.30px;top:859.85px;font-size:21px;line-height:21px;font-weight:400;color:#505154;letter-spacing:0.027px;-webkit-text-stroke:0.2px #505154;">Alana Grant</div>
<div class="t" style="left:1738.90px;top:863.45px;font-size:16.5px;line-height:16.5px;font-weight:700;color:#1c2536;letter-spacing:0.896px;-webkit-text-stroke:0.25px #1c2536;">TO DO</div>
<div class="t" style="left:197.90px;top:947.70px;font-size:21px;line-height:21px;font-weight:400;color:#6b6c70;letter-spacing:-0.126px;-webkit-text-stroke:0.8px #6b6c70;">HR-76</div>
<div class="t" style="left:496.80px;top:945.70px;font-size:22px;line-height:22px;font-weight:400;color:#29292b;letter-spacing:0.318px;-webkit-text-stroke:0.2px #29292b;">Questions</div>
<div class="t" style="left:459.60px;top:976.70px;font-size:22px;line-height:22px;font-weight:400;color:#29292b;letter-spacing:-0.055px;-webkit-text-stroke:0.2px #29292b;">for HR</div>
<div class="t" style="left:661.80px;top:948.00px;font-size:22px;line-height:22px;font-weight:400;color:#1868db;letter-spacing:0.210px;-webkit-text-stroke:0.2px #1868db;">when do I get a raise</div>
<div class="t" style="left:1123.30px;top:948.10px;font-size:22px;line-height:22px;font-weight:400;color:#29292b;letter-spacing:0.474px;-webkit-text-stroke:0.2px #29292b;">Gob Bluth</div>
<div class="t" style="left:1388.60px;top:948.00px;font-size:22px;line-height:22px;font-weight:400;color:#29292b;letter-spacing:0.545px;-webkit-text-stroke:0.2px #29292b;">Neutral</div>
<div class="t" style="left:1584.30px;top:948.10px;font-size:21px;line-height:21px;font-weight:400;color:#505154;letter-spacing:0.027px;-webkit-text-stroke:0.2px #505154;">Alana Grant</div>
<div class="t" style="left:1738.90px;top:951.70px;font-size:16.5px;line-height:16.5px;font-weight:700;color:#1c2536;letter-spacing:0.896px;-webkit-text-stroke:0.25px #1c2536;">TO DO</div>
<div class="t" style="left:197.90px;top:1035.95px;font-size:21px;line-height:21px;font-weight:400;color:#6b6c70;letter-spacing:-0.126px;-webkit-text-stroke:0.8px #6b6c70;">HR-78</div>
<div class="t" style="left:496.80px;top:1033.95px;font-size:22px;line-height:22px;font-weight:400;color:#29292b;letter-spacing:-0.364px;-webkit-text-stroke:0.2px #29292b;">Raise HR</div>
<div class="t" style="left:458.60px;top:1064.95px;font-size:22px;line-height:22px;font-weight:400;color:#29292b;letter-spacing:-0.141px;-webkit-text-stroke:0.2px #29292b;">Case</div>
<div class="t" style="left:659.80px;top:1036.25px;font-size:22px;line-height:22px;font-weight:400;color:#1868db;letter-spacing:0.493px;-webkit-text-stroke:0.2px #1868db;">poor behavior at the company hh</div>
<div class="t" style="left:1123.30px;top:1036.35px;font-size:22px;line-height:22px;font-weight:400;color:#29292b;letter-spacing:0.474px;-webkit-text-stroke:0.2px #29292b;">Gob Bluth</div>
<div class="t" style="left:1388.60px;top:1036.25px;font-size:22px;line-height:22px;font-weight:400;color:#29292b;letter-spacing:0.401px;-webkit-text-stroke:0.2px #29292b;">Negative</div>
<div class="t" style="left:1584.30px;top:1036.35px;font-size:21px;line-height:21px;font-weight:400;color:#505154;letter-spacing:0.027px;-webkit-text-stroke:0.2px #505154;">Alana Grant</div>
<div class="t" style="left:1738.90px;top:1039.95px;font-size:16.5px;line-height:16.5px;font-weight:700;color:#1c2536;letter-spacing:0.896px;-webkit-text-stroke:0.25px #1c2536;">TO DO</div>
<div class="t" style="left:197.90px;top:1124.20px;font-size:21px;line-height:21px;font-weight:400;color:#6b6c70;letter-spacing:0.299px;-webkit-text-stroke:0.8px #6b6c70;">HR-80</div>
<div class="t" style="left:496.80px;top:1122.20px;font-size:22px;line-height:22px;font-weight:400;color:#29292b;letter-spacing:0.058px;-webkit-text-stroke:0.2px #29292b;">Employee</div>
<div class="t" style="left:459.60px;top:1153.20px;font-size:22px;line-height:22px;font-weight:400;color:#29292b;letter-spacing:0.795px;-webkit-text-stroke:0.2px #29292b;">offboarding</div>
<div class="t" style="left:659.80px;top:1124.50px;font-size:22px;line-height:22px;font-weight:400;color:#1868db;letter-spacing:0.475px;-webkit-text-stroke:0.2px #1868db;">Retiring</div>
<div class="t" style="left:1123.30px;top:1124.60px;font-size:22px;line-height:22px;font-weight:400;color:#29292b;letter-spacing:0.362px;-webkit-text-stroke:0.2px #29292b;">Mitch Davis</div>
<div class="t" style="left:1388.60px;top:1124.50px;font-size:22px;line-height:22px;font-weight:400;color:#29292b;letter-spacing:0.545px;-webkit-text-stroke:0.2px #29292b;">Neutral</div>
<div class="t" style="left:1584.30px;top:1124.60px;font-size:21px;line-height:21px;font-weight:400;color:#505154;letter-spacing:0.027px;-webkit-text-stroke:0.2px #505154;">Alana Grant</div>
<div class="t" style="left:1737.90px;top:1128.20px;font-size:16.5px;line-height:16.5px;font-weight:700;color:#1c2536;letter-spacing:0.911px;-webkit-text-stroke:0.25px #1c2536;">FINAL REVIEW</div>
</div>
<div class="a" style="left:0;top:1178px;width:1999px;height:1px;background:#eefbea"></div>
</body></html>
